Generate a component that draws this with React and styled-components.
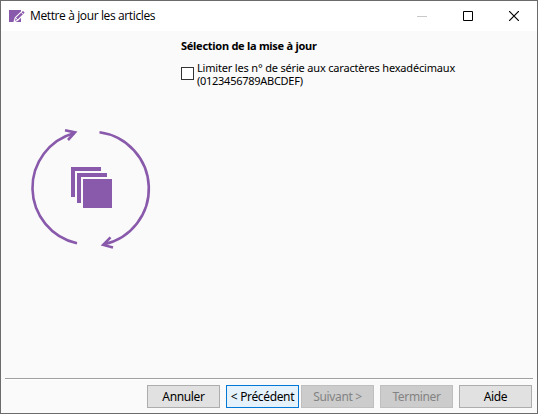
import React from "react";
import styled, { createGlobalStyle } from "styled-components";

const Global = createGlobalStyle`
  * { box-sizing: border-box; }
  body { margin: 0; background: #fafafa; overflow: hidden; }
`;

const Window = styled.div`
  width: 538px;
  height: 414px;
  display: flex;
  flex-direction: column;
  border: 1px solid #6b6b6b;
  background: #fafafa;
  color: #000;
  font-family: "Noto Sans", "Open Sans", sans-serif;
  font-size: 11px;
  line-height: 13px;
  white-space: nowrap;
`;

const TitleBar = styled.header`
  display: flex;
  align-items: center;
  height: 30px;
  flex: none;
  padding-left: 8px;
  background: #fff;
`;

const Title = styled.h1`
  flex: 1;
  margin: 0 0 0 4px;
  font: 400 12px/16px "Open Sans", "Noto Sans", sans-serif;
  letter-spacing: -0.38px;
`;

const CaptionButton = styled.button`
  width: 46px;
  height: 30px;
  padding: 0;
  border: 0;
  background: none;
  color: ${(p) => (p.disabled ? "#c8c8c8" : "#000")};
  svg { display: block; margin: 0 auto; }
`;

const Body = styled.main`
  display: flex;
  flex: 1;
`;

const Illustration = styled.aside`
  width: 179px;
  flex: none;
  padding: 94px 0 0 24px;
  svg { display: block; }
`;

const Content = styled.section`
  padding-top: 7px;
`;

const Heading = styled.h2`
  margin: 0 0 0 1px;
  font-size: 11px;
  font-weight: 700;
  line-height: 15px;
  letter-spacing: -0.27px;
`;

const Option = styled.label`
  display: flex;
  margin-top: 8px;
  line-height: 13px;
`;

const Checkbox = styled.input`
  appearance: none;
  width: 13px;
  height: 13px;
  margin: 6px 3px 0 1px;
  border: 1px solid #333;
  background: #fff;
`;

const OptionLine = styled.span`
  display: block;
  letter-spacing: ${(p) => p.$spacing};
`;

const Footer = styled.footer`
  display: flex;
  justify-content: flex-end;
  height: 35px;
  flex: none;
  margin: 0 4px;
  padding: 6px 1px 0 0;
  border-top: 1px solid #a0a0a0;
  box-shadow: inset 0 1px #fff;
`;

const Button = styled.button`
  width: 73px;
  height: 23px;
  margin-left: ${(p) => p.$gap || 6}px;
  padding: 0;
  border: 1px solid ${(p) => (p.$primary ? "#0078d7" : "#adadad")};
  background: ${(p) => (p.$primary ? "#e5f1fb" : "#e1e1e1")};
  color: #000;
  font: 400 12px/16px "Noto Sans", sans-serif;
  letter-spacing: -0.35px;
  &:disabled {
    border-color: #bfbfbf;
    background: #ccc;
    color: #838383;
  }
`;

const AppIcon = () => (
  <svg width="17" height="14" viewBox="0 0 17 14">
    <path d="M0 1h12v12H0z" fill="#8959ab" />
    <path d="M5 13l1.3-4.4L14 1.2l2.4 2.5-7.7 7.5z" fill="#8959ab" stroke="#fff" strokeWidth="1.1" />
    <path d="M6.8 9l2 2M12 3.2l2.3 2.3" stroke="#fff" />
  </svg>
);

const UpdateCycle = () => (
  <svg width="132" height="128" viewBox="25 125 132 128" fill="none" stroke="#8959ab" strokeWidth="2.6">
    <path d="M77 243.2A56.8 56.8 0 0 1 74.5 132.9" />
    <path d="M65 130.2L75 132.4L68 140" />
    <path d="M99.5 132.3A56.9 56.9 0 0 1 104 244.3" />
    <path d="M110.5 237.3L103.2 244.9L113 247.4" />
    <g fill="#8959ab" stroke="none">
      <path d="M71 167h30v4H75v26h-4z" />
      <path d="M77 173h30v4H81v26h-4z" />
      <path d="M83 179h29v29H83z" />
    </g>
  </svg>
);

export default function App() {
  return (
    <Window>
      <Global />
      <TitleBar>
        <AppIcon />
        <Title>Mettre à jour les articles</Title>
        <CaptionButton disabled aria-label="Réduire">
          <svg width="10" height="10"><path d="M0 5.5h10" stroke="currentColor" /></svg>
        </CaptionButton>
        <CaptionButton aria-label="Agrandir">
          <svg width="10" height="10"><path d="M.5.5h9v9h-9z" fill="none" stroke="currentColor" /></svg>
        </CaptionButton>
        <CaptionButton aria-label="Fermer">
          <svg width="10" height="10"><path d="M0 0l10 10M10 0L0 10" stroke="currentColor" strokeWidth="1.2" /></svg>
        </CaptionButton>
      </TitleBar>
      <Body>
        <Illustration><UpdateCycle /></Illustration>
        <Content>
          <Heading>Sélection de la mise à jour</Heading>
          <Option>
            <Checkbox type="checkbox" />
            <span>
              <OptionLine $spacing="-0.18px">Limiter les n° de série aux caractères hexadécimaux</OptionLine>
              <OptionLine $spacing="-0.27px">(0123456789ABCDEF)</OptionLine>
            </span>
          </Option>
        </Content>
      </Body>
      <Footer>
        <Button>Annuler</Button>
        <Button $primary>&lt; Précédent</Button>
        <Button $gap={2} disabled>Suivant &gt;</Button>
        <Button disabled>Terminer</Button>
        <Button>Aide</Button>
      </Footer>
    </Window>
  );
}
